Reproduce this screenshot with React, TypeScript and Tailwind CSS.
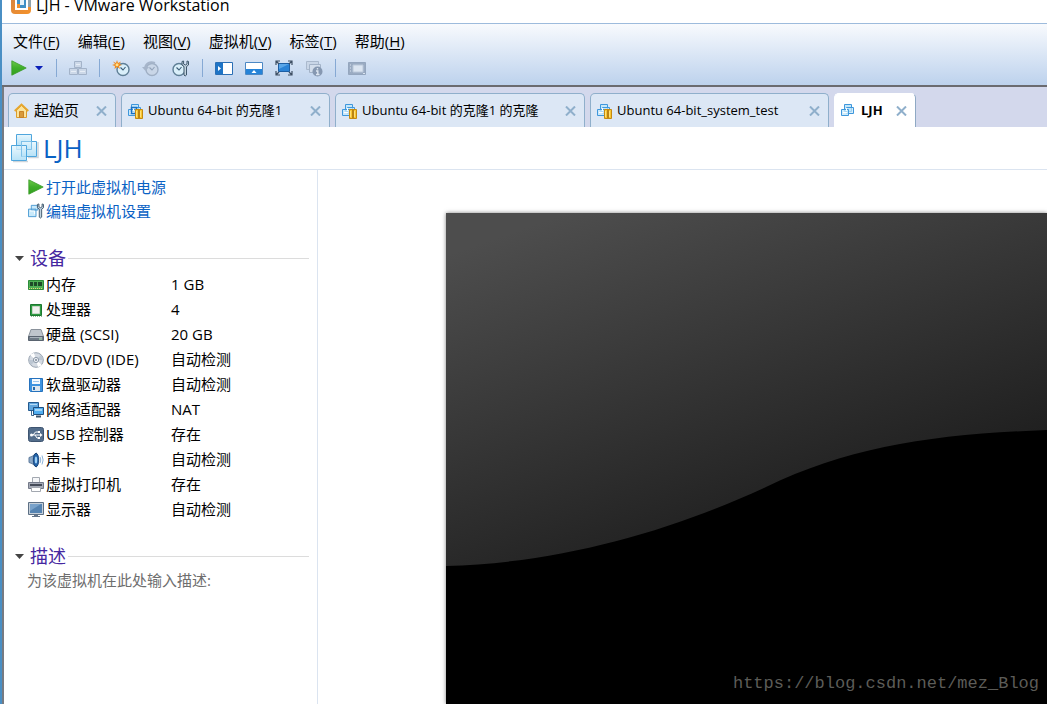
import React from 'react';

const menus = [
  { label: '文件', hotkey: 'F' },
  { label: '编辑', hotkey: 'E' },
  { label: '视图', hotkey: 'V' },
  { label: '虚拟机', hotkey: 'V' },
  { label: '标签', hotkey: 'T' },
  { label: '帮助', hotkey: 'H' },
];

const LogoIcon = () => (
  <svg width="20" height="14" viewBox="0 0 20 14" aria-hidden="true">
    <defs>
      <linearGradient id="logo" x1="0" y1="0" x2="1" y2="1">
        <stop offset="0" stopColor="#d9853f" />
        <stop offset="1" stopColor="#f5922a" />
      </linearGradient>
    </defs>
    <path d="M0 0H20V10Q20 14 16 14H4Q0 14 0 10Z" fill="url(#logo)" />
    <path d="M16 0H20V7H16Z" fill="#8fa3ad" />
    <path d="M4 0H17V10H4Z" fill="#fff" />
    <path d="M6 0H15V8H6Z" fill="#3f8fc6" />
    <path d="M6 4H9V8H6Z" fill="#f0902d" />
    <path d="M9 0H13V5H9Z" fill="#e4f2fb" />
  </svg>
);

const PlayIcon = ({ size }: { size: number }) => (
  <svg width={size} height={size} viewBox="0 0 16 16" aria-hidden="true">
    <defs>
      <linearGradient id="play" x1="0" y1="0" x2="0" y2="1">
        <stop offset="0" stopColor="#6cc94a" />
        <stop offset="0.5" stopColor="#3fae2a" />
        <stop offset="1" stopColor="#33a01f" />
      </linearGradient>
    </defs>
    <path d="M.8 .8L15.2 8L.8 15.2Z" fill="url(#play)" stroke="#3a9c28" strokeWidth=".8" />
  </svg>
);

const BoxesIcon = () => (
  <svg width="19" height="16" viewBox="0 0 19 16" fill="#ccd8e8" stroke="#a3b3c9" aria-hidden="true">
    <path d="M5.5 1.5H12.5V7.5H5.5ZM.5 8.5H8.5V14.5H.5ZM9.5 8.5H17.5V14.5H9.5Z" />
    <path d="M7 4.5H11M2 11.5H7M11 11.5H16" stroke="#e6edf6" />
  </svg>
);

const ClockFace = ({ cx, muted }: { cx: number; muted?: boolean }) => (
  <g>
    <circle cx={cx} cy="9.5" r="6" fill={muted ? '#c9d6e7' : '#d9effa'} stroke={muted ? '#9fafc4' : '#5f7f96'} strokeWidth="1.4" />
    <path d={`M${cx - 2.5} 7.5L${cx} 10L${cx + 2.5} 7`} fill="none" stroke={muted ? '#91a2b9' : '#3c5d77'} strokeWidth="1.1" />
  </g>
);

const SnapshotIcon = () => (
  <svg width="18" height="17" viewBox="0 0 18 17" aria-hidden="true">
    <ClockFace cx={11} />
    <path d="M5 0L6 3L9 1.5L7.5 4L10 5L7 6L8 9L5 7L2.5 9L3 6L0 5L3 4L1 1.5L4 3Z" fill="#f08a1d" />
    <circle cx="5" cy="4.8" r="1.5" fill="#ffe28a" />
  </svg>
);

const RevertIcon = () => (
  <svg width="18" height="17" viewBox="0 0 18 17" aria-hidden="true">
    <ClockFace cx={10} muted />
    <path d="M3 8C4 3 8 1 13 3" fill="none" stroke="#a6b5ca" strokeWidth="2" />
    <path d="M0 7H7L3.5 11Z" fill="#a6b5ca" />
  </svg>
);

const WrenchPath = () => (
  <path d="M10 1.5V5L12 6.5V15Q13 17 14.5 15V6.5L16.5 5V1.5L15 1V4L13.3 5L11.6 4V1Z" fill="#c3d3df" stroke="#3f586d" />
);

const ManageIcon = () => (
  <svg width="18" height="17" viewBox="0 0 18 17" aria-hidden="true">
    <ClockFace cx={7} />
    <WrenchPath />
  </svg>
);

const SidebarIcon = () => (
  <svg width="18" height="13" viewBox="0 0 18 13" aria-hidden="true">
    <path d="M.5 .5H17.5V12.5H.5Z" fill="#fff" stroke="#2a6fb5" />
    <path d="M1 1H8V12H1Z" fill="#1e74c6" />
    <path d="M3 4L6 6.5L3 9Z" fill="#fff" />
  </svg>
);

const ThumbnailIcon = () => (
  <svg width="18" height="13" viewBox="0 0 18 13" aria-hidden="true">
    <path d="M.5 .5H17.5V12.5H.5Z" fill="#fff" stroke="#4c88c4" />
    <path d="M1 7H17V12H1Z" fill="#2583d8" />
    <path d="M6.5 11L9 8L11.5 11Z" fill="#fff" />
  </svg>
);

const FullscreenIcon = () => (
  <svg width="18" height="16" viewBox="0 0 18 16" aria-hidden="true">
    <path d="M3.5 3.5H14.5V11.5H3.5Z" fill="#2b83d6" stroke="#1d5fa5" />
    <path d="M4 4H14L4 9Z" fill="#5aa6e8" />
    <path d="M1 5V1H5M13 1H17V5M17 11V15H13M5 15H1V11M1 1L4 4M17 1L14 4M1 15L4 12M17 15L14 12" fill="none" stroke="#3e4f63" strokeWidth="1.2" />
  </svg>
);

const UnityIcon = () => (
  <svg width="17" height="17" viewBox="0 0 17 17" aria-hidden="true">
    <path d="M.5 1.5H12.5V9.5H.5Z" fill="#c9d6e7" stroke="#aab9cd" />
    <path d="M3.5 4.5H14.5V12.5H3.5Z" fill="#d3deec" stroke="#a3b3c8" />
    <circle cx="11.5" cy="11.5" r="5" fill="#8698b1" />
    <path d="M11.5 8V9.5M10 11H11.8V14.5M10 14.5H13.5" fill="none" stroke="#dde6f1" strokeWidth="1.4" />
  </svg>
);

const ConsoleIcon = () => (
  <svg width="18" height="13" viewBox="0 0 18 13" aria-hidden="true">
    <path d="M.5 .5H17.5V12.5H.5Z" fill="#9aabc2" stroke="#94a6be" />
    <path d="M5 3H15V10H5Z" fill="#dbe5f1" stroke="#bac8da" />
    <path d="M2 3H3M2 6H3M2 9H3M15 11.5H17" stroke="#dbe5f1" />
  </svg>
);

const HomeIcon = () => (
  <svg width="15" height="16" viewBox="0 0 15 16" aria-hidden="true">
    <path d="M2.5 7V14.5H12.5V7L7.5 2.5Z" fill="#fbe49c" stroke="#dc9c2b" />
    <path d="M.7 8L7.5 1.5L14.3 8" fill="none" stroke="#e6a62e" strokeWidth="1.8" />
    <path d="M5.5 8.5H9.5V14.5H5.5Z" fill="#d99a39" stroke="#c98325" />
  </svg>
);

const VmIcon = ({ state }: { state: string }) => (
  <svg width="16" height="16" viewBox="0 0 16 16" aria-hidden="true">
    <g fill="#c4e7fa" stroke="#3e97dc">
      <path d="M4.5 1.5H11.5V8.5H4.5Z" />
      <path d="M6.5 4.5H13.5V10.5H6.5Z" fillOpacity=".7" />
      <path d="M1.5 6.5H8.5V12.5H1.5Z" fillOpacity=".8" />
      <path d="M3 9.5H7M6.5 5V8" stroke="#fff" />
    </g>
    {state === 'clone' && <path d="M4.5 4.5H9.5V10.5H4.5Z" fill="none" stroke="#1670c4" strokeWidth="1.5" />}
    {state !== 'idle' && (
      <g>
        <path d="M8.5 6.5H15.5V15.5H8.5Z" fill="#f8c733" stroke="#c48a12" />
        <path d="M12 7V15" stroke="#a76e08" strokeWidth="1.5" />
        <path d="M9.5 8V14M13.5 8V14" stroke="#ffe07a" />
      </g>
    )}
  </svg>
);

const BigVmIcon = () => (
  <svg width="28" height="30" viewBox="0 0 28 30" aria-hidden="true">
    <defs>
      <linearGradient id="vm" x1="0" y1="0" x2="0" y2="1">
        <stop offset="0" stopColor="#e8f7fe" />
        <stop offset="1" stopColor="#a4daf5" />
      </linearGradient>
    </defs>
    <path d="M2 28.5H17M17 24.5H27V9" fill="none" stroke="#cdd4da" strokeWidth="1.5" />
    <g fill="url(#vm)" stroke="#4fa6dd">
      <path d="M5.5 1.5H20.5V16.5H5.5Z" />
      <path d="M10.5 8.5H25.5V23.5H10.5Z" fillOpacity=".8" />
      <path d="M.5 12.5H15.5V27.5H.5Z" fillOpacity=".8" />
      <path d="M10.5 12V8.5H20.5V16.5H15.5M10.5 12V23.5" fill="none" stroke="#7fc1e9" />
    </g>
  </svg>
);

const EditSettingsIcon = () => (
  <svg width="16" height="16" viewBox="0 0 17 17" aria-hidden="true">
    <path d="M3.5 2.5H10.5V7.5H3.5ZM.5 6.5H8.5V14.5H.5Z" fill="#c9eafb" stroke="#4b9bd3" />
    <path d="M2 8.5H7V12" fill="none" stroke="#fff" />
    <WrenchPath />
  </svg>
);

const deviceIcons: Record<string, React.ReactNode> = {
  memory: (
    <>
      <path d="M.5 3.5H15.5V12.5H.5Z" fill="#4eb055" stroke="#2d8b3a" />
      <path d="M2 5H5V9H2ZM6 5H9V9H6ZM10 5H14V9H10Z" fill="#1d4a28" />
      <path d="M1 11.5H15" stroke="#e2d576" strokeDasharray="1 1" />
    </>
  ),
  cpu: (
    <>
      <path d="M2.5 2.5H13.5V13.5H2.5Z" fill="#2f9c43" stroke="#1d7830" />
      <path d="M4.5 4.5H11.5V11.5H4.5Z" fill="#f0f1ee" stroke="#c8d6c6" />
      <path d="M3 14.5H14" stroke="#8dbb92" strokeDasharray="1 1" />
    </>
  ),
  disk: (
    <>
      <path d="M3 2.5H13L15.5 9.5H.5Z" fill="#bfc5cc" stroke="#8a929b" />
      <path d="M.5 9.5H15.5V13.5H.5Z" fill="#6f7a86" stroke="#59636f" />
      <path d="M2 10.5H14" stroke="#a9b2bb" />
      <path d="M11 12H14" stroke="#b8edbb" />
    </>
  ),
  cd: (
    <>
      <circle cx="8" cy="8" r="7.3" fill="#d4dae2" stroke="#98a3b0" />
      <path d="M8 8L2 3A8 8 0 0 1 6 1ZM8 8L14 13A8 8 0 0 1 10 15Z" fill="#fff" />
      <path d="M8 8L1 8A7 7 0 0 0 3 13ZM8 8L15 8A7 7 0 0 0 13 3Z" fill="#bcc6d2" />
      <circle cx="8" cy="8" r="2.6" fill="#eef1f5" stroke="#8c99a8" />
      <circle cx="8" cy="8" r="1" fill="#7d8998" />
    </>
  ),
  floppy: (
    <>
      <path d="M1.5 1.5H14.5V14.5H2.5L1.5 13.5Z" fill="#3d93e0" stroke="#2672bd" />
      <path d="M4 2H12V7H4Z" fill="#f4f9fe" />
      <path d="M5 4.5H11" stroke="#9cc6ec" />
      <path d="M4 9H12V14H4Z" fill="#dde6ee" />
      <path d="M5 10H7V13H5Z" fill="#2569aa" />
    </>
  ),
  network: (
    <>
      <path d="M.5 .5H10.5V8.5H.5Z" fill="#62a7de" stroke="#23598e" />
      <path d="M2 2H9V3H2Z" fill="#b7dbf6" />
      <path d="M3.5 9V13.5H6" fill="none" stroke="#3f698f" />
      <path d="M5.5 5.5H15.5V12.5H5.5Z" fill="#51aef0" stroke="#1f4f80" />
      <path d="M7 7H14V9H7Z" fill="#a6d8f9" />
      <path d="M8 14.5H13" stroke="#3d5268" strokeWidth="2" />
    </>
  ),
  usb: (
    <>
      <rect x=".5" y=".5" width="15" height="14" rx="2" fill="#536d8b" stroke="#3e5470" />
      <path d="M3 8H13M5 8L7.5 5H10M7 8L9 11H11" fill="none" stroke="#fff" />
      <circle cx="3.5" cy="8" r="1.5" fill="#fff" />
      <path d="M12 6L14.5 8L12 10ZM10 4H12V6H10ZM10 10H12V12H10Z" fill="#fff" />
    </>
  ),
  sound: (
    <>
      <path d="M1 5.5L4 4.5L8.5 1V15L4 11.5L1 10.5Z" fill="#8aa7c6" stroke="#5d7b9c" />
      <ellipse cx="8" cy="8" rx="2.7" ry="6.7" fill="#2364aa" stroke="#1d477a" />
      <ellipse cx="8" cy="8" rx="1.2" ry="3.5" fill="#9fd0f4" />
      <path d="M12 5Q13.5 8 12 11M14 3.5Q16.2 8 14 12.5" fill="none" stroke="#8fb5da" />
    </>
  ),
  printer: (
    <>
      <path d="M4.5 .5H11.5V6.5H4.5Z" fill="#f6f7f9" stroke="#a3a8b0" />
      <path d="M.5 5.5H15.5V11.5H.5Z" fill="#a6abb7" stroke="#747a89" />
      <path d="M2 8H14" stroke="#454b58" strokeWidth="2" />
      <path d="M3.5 10.5H12.5V14.5H3.5Z" fill="#fff" stroke="#a3a8b0" />
    </>
  ),
  display: (
    <>
      <path d="M.5 .5H15.5V12.5H.5Z" fill="#c5cfd9" stroke="#5d7085" />
      <path d="M2 2H14V11H2Z" fill="#5583b1" />
      <path d="M2 2H13L2 9Z" fill="#79a2ca" />
      <path d="M6 13H10V14H12V15H4V14H6Z" fill="#637489" />
    </>
  ),
};

const tools = [
  { name: '挂起', icon: <BoxesIcon /> },
  { name: '拍摄快照', icon: <SnapshotIcon /> },
  { name: '恢复快照', icon: <RevertIcon /> },
  { name: '管理快照', icon: <ManageIcon /> },
  { name: '显示库', icon: <SidebarIcon /> },
  { name: '缩略图', icon: <ThumbnailIcon /> },
  { name: '全屏', icon: <FullscreenIcon /> },
  { name: 'Unity', icon: <UnityIcon /> },
  { name: '控制台', icon: <ConsoleIcon /> },
];

const tabs = [
  { title: '起始页', state: 'home', width: 'w-[108px]' },
  { title: 'Ubuntu 64-bit 的克隆1', state: 'clone', width: 'w-[209px]' },
  { title: 'Ubuntu 64-bit 的克隆1 的克隆', state: 'paused', width: 'w-[250px]' },
  { title: 'Ubuntu 64-bit_system_test', state: 'paused', width: 'w-[239px]' },
  { title: 'LJH', state: 'idle', width: 'w-[82px]' },
];

const devices = [
  { icon: 'memory', name: '内存', value: '1 GB' },
  { icon: 'cpu', name: '处理器', value: '4' },
  { icon: 'disk', name: '硬盘 (SCSI)', value: '20 GB' },
  { icon: 'cd', name: 'CD/DVD (IDE)', value: '自动检测' },
  { icon: 'floppy', name: '软盘驱动器', value: '自动检测' },
  { icon: 'network', name: '网络适配器', value: 'NAT' },
  { icon: 'usb', name: 'USB 控制器', value: '存在' },
  { icon: 'sound', name: '声卡', value: '自动检测' },
  { icon: 'printer', name: '虚拟打印机', value: '存在' },
  { icon: 'display', name: '显示器', value: '自动检测' },
];

const ToolButton = ({ index }: { index: number }) => (
  <button type="button" aria-label={tools[index].name} className="flex h-5 w-5 items-center justify-center">
    {tools[index].icon}
  </button>
);

const Separator = () => <span className="h-[18px] w-px bg-[#86a9d4]" />;

const SectionTitle = ({ title }: { title: string }) => (
  <div className="flex items-center pr-2 pl-[11px]">
    <svg width="9" height="5" viewBox="0 0 9 5" aria-hidden="true">
      <path d="M0 0H9L4.5 5Z" fill="#444" />
    </svg>
    <h2 className="ml-1.5 text-lg leading-6 text-[#4527a0]">{title}</h2>
    <span className="ml-0.5 h-px flex-1 bg-[#dcdcdc]" />
  </div>
);

const Toolbar = () => (
  <div className="flex items-center pb-[7px] pl-[7px]">
    <button type="button" aria-label="开启" className="flex w-5 justify-center"><PlayIcon size={16} /></button>
    <button type="button" aria-label="电源选项" className="ml-1.5 w-2">
      <svg width="8" height="5" viewBox="0 0 8 5" aria-hidden="true"><path d="M0 0H8L4 4.5Z" fill="#0a1fb8" /></svg>
    </button>
    <div className="ml-[13px] flex items-center gap-[11px]">
      <Separator />
      <ToolButton index={0} />
      <Separator />
      <div className="flex gap-2.5">
        <ToolButton index={1} />
        <ToolButton index={2} />
        <ToolButton index={3} />
      </div>
      <Separator />
      <div className="flex gap-2.5">
        <ToolButton index={4} />
        <ToolButton index={5} />
        <ToolButton index={6} />
        <ToolButton index={7} />
      </div>
      <Separator />
      <ToolButton index={8} />
    </div>
  </div>
);

const TabBar = () => (
  <div className="flex h-10 items-end gap-[5px] bg-[#d3d8ec] pl-1">
    {tabs.map((tab) => {
      const active = tab.state === 'idle';
      return (
        <div
          key={tab.title}
          className={`flex h-[34px] items-center rounded-t-[5px] border border-b-0 pr-2 pl-[5px] ${tab.width} ${active ? 'border-white border-r-[#8fa9c4] bg-white' : 'border-[#8fafcb] bg-[#dce7f5]'}`}
        >
          {tab.state === 'home' ? <HomeIcon /> : <VmIcon state={tab.state} />}
          <button type="button" className={`ml-[5px] flex-1 text-left whitespace-nowrap ${tab.state === 'home' ? 'text-[15px]' : 'text-[13px]'} ${active ? 'font-bold' : ''}`}>
            {tab.title}
          </button>
          <button type="button" aria-label="关闭">
            <svg width="11" height="10" viewBox="0 0 11 10" aria-hidden="true">
              <path d="M1 .5L10 9.5M10 .5L1 9.5" stroke="#8fafcb" strokeWidth="2" />
            </svg>
          </button>
        </div>
      );
    })}
  </div>
);

const Preview = () => (
  <svg className="h-full w-full" viewBox="0 0 602 491" preserveAspectRatio="xMinYMin slice" aria-hidden="true">
    <defs>
      <linearGradient id="screen" gradientUnits="userSpaceOnUse" x1="13" y1="38" x2="134" y2="381">
        <stop offset="0" stopColor="#4d4d4d" />
        <stop offset="1" stopColor="#202020" />
      </linearGradient>
    </defs>
    <path d="M0 0H602V491H0Z" fill="url(#screen)" />
    <path d="M0 353C115 350 225 318 320 274C405 233 490 221 602 217V491H0Z" fill="#000" />
  </svg>
);

const App: React.FC = () => {
  return (
    <div className="flex h-screen flex-col overflow-hidden border-l-2 border-[#4a8fc4] bg-white font-['Open_Sans','Noto_Sans_CJK_SC',sans-serif] text-[15px] text-black">
      <header className="flex h-[23px] items-start pl-[9px]">
        <LogoIcon />
        <h1 className="ml-[5px] text-base leading-[10px]">LJH - VMware Workstation</h1>
      </header>

      <div className="border-t border-b-2 border-t-[#9dbbdc] border-b-[#6b6b70] bg-linear-to-b from-[#f8fafd] to-[#bdd2ed]">
        <nav className="flex h-[34px] items-center gap-[18px] pl-[11px]">
          {menus.map((menu) => (
            <button key={menu.label} type="button" className="whitespace-nowrap">
              {menu.label}(<span className="underline underline-offset-2">{menu.hotkey}</span>)
            </button>
          ))}
        </nav>
        <Toolbar />
      </div>

      <main className="flex min-h-0 flex-1 flex-col border-l-2 border-[#777b82]">
        <TabBar />
        <div className="flex h-[43px] items-center border-b border-[#dbe4f0] pl-[7px]">
          <BigVmIcon />
          <h2 className="ml-1 text-[26px] leading-8 text-[#0a62c4]">LJH</h2>
        </div>

        <div className="flex min-h-0 flex-1">
          <aside className="w-[314px] shrink-0 border-r border-[#dbe4f0] pt-[5px]">
            <div className="flex flex-col pl-6 text-[#0a62c4]">
              <a href="#power" className="flex h-6 items-center gap-0.5"><PlayIcon size={16} />打开此虚拟机电源</a>
              <a href="#settings" className="flex h-6 items-center gap-0.5"><EditSettingsIcon />编辑虚拟机设置</a>
            </div>

            <section className="mt-[23px]">
              <SectionTitle title="设备" />
              <table className="mt-0.5 ml-6">
                <tbody>
                  {devices.map((device) => (
                    <tr key={device.name} className="h-[25px]">
                      <th className="w-[143px] p-0 text-left font-normal">
                        <span className="flex items-center gap-0.5">
                          <svg width="16" height="16" viewBox="0 0 16 16" aria-hidden="true">{deviceIcons[device.icon]}</svg>
                          {device.name}
                        </span>
                      </th>
                      <td className="p-0">{device.value}</td>
                    </tr>
                  ))}
                </tbody>
              </table>
            </section>

            <section className="mt-[22px]">
              <SectionTitle title="描述" />
              <p className="pl-[23px] leading-6 text-[#6e6e6e]">为该虚拟机在此处输入描述:</p>
            </section>
          </aside>

          <div className="relative min-w-0 flex-1 pt-[43px] pl-[128px]">
            <div className="h-full shadow-[0_0_4px_rgba(0,0,0,0.5)]">
              <Preview />
            </div>
            <p className="absolute right-2 bottom-2 font-['Liberation_Mono',monospace] text-[17px] leading-6 text-[#5c5c58]">
              https://blog.csdn.net/mez_Blog
            </p>
          </div>
        </div>
      </main>
    </div>
  );
};

export default App;
